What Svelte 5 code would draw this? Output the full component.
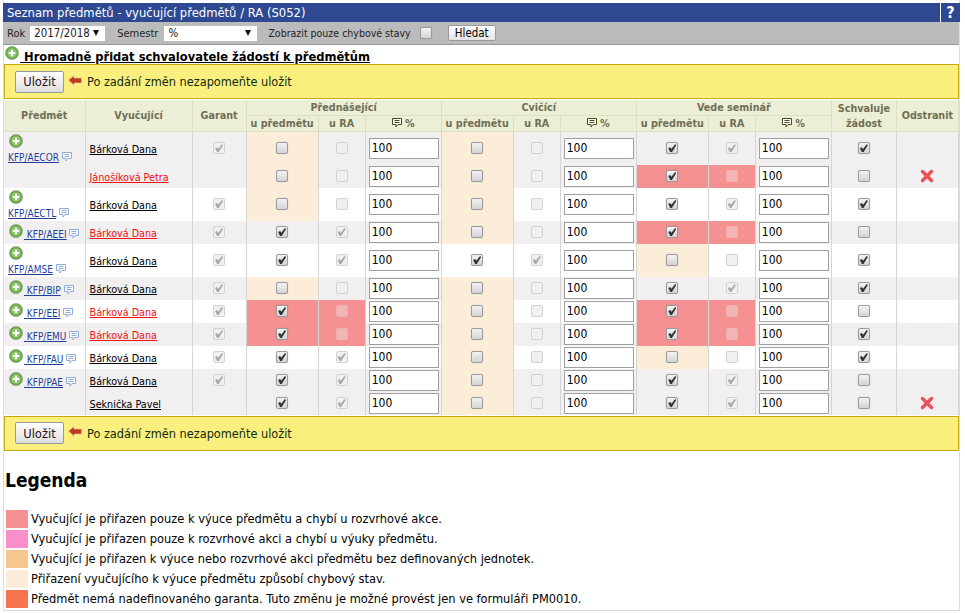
<script>
  const H = 'Bárková Dana';
  // state of one group: [cell colour, checked, checked RA]
  const w = (c = true) => ['', c, c];
  const cream = ['cream', false, false];
  const red = ['red', true, false];

  const subjects = [
    { code: 'KFP/AECOR', wrap: true, rows: [
      { name: H, garant: true, p: cream, c: cream, s: w(), ok: true, h: 33 },
      { name: 'Jánošíková Petra', bad: true, p: cream, c: cream, s: red, del: true, h: 23 }
    ] },
    { code: 'KFP/AECTL', wrap: true, rows: [{ name: H, garant: true, p: cream, c: cream, s: w(), ok: true, h: 33 }] },
    { code: 'KFP/AEEI', rows: [{ name: H, bad: true, garant: true, p: w(), c: cream, s: red, h: 23 }] },
    { code: 'KFP/AMSE', wrap: true, rows: [{ name: H, garant: true, p: w(), c: w(), s: cream, ok: true, h: 33 }] },
    { code: 'KFP/BIP', rows: [{ name: H, garant: true, p: cream, c: cream, s: w(), ok: true, h: 23 }] },
    { code: 'KFP/EEI', rows: [{ name: H, bad: true, garant: true, p: red, c: cream, s: red, h: 23 }] },
    { code: 'KFP/EMU', rows: [{ name: H, bad: true, garant: true, p: red, c: cream, s: red, ok: true, h: 23 }] },
    { code: 'KFP/FAU', rows: [{ name: H, garant: true, p: w(), c: cream, s: cream, ok: true, h: 23 }] },
    { code: 'KFP/PAE', rows: [
      { name: H, garant: true, p: w(), c: cream, s: w(), h: 23 },
      { name: 'Seknička Pavel', p: w(), c: cream, s: w(), del: true, h: 23 }
    ] }
  ];

  const legend = [
    ['#f59093', 'Vyučující je přiřazen pouze k výuce předmětu a chybí u rozvrhové akce.'],
    ['#f88fc8', 'Vyučující je přiřazen pouze k rozvrhové akci a chybí u výuky předmětu.'],
    ['#f6c78c', 'Vyučující je přiřazen k výuce nebo rozvrhové akci předmětu bez definovaných jednotek.'],
    ['#fcedd9', 'Přiřazení vyučujícího k výuce předmětu způsobí chybový stav.'],
    ['#f6744e', 'Předmět nemá nadefinovaného garanta. Tuto změnu je možné provést jen ve formuláři PM0010.']
  ];
</script>

{#snippet plus()}
  <svg class="plus" viewBox="0 0 14 14" width="14" height="14">
    <circle cx="7" cy="7" r="6.6" fill="#6fa94e" stroke="#8c9a80" stroke-width="0.6" />
    <circle cx="7" cy="7" r="4.6" fill="#8fc96b" />
    <path d="M7 3.8v6.4M3.8 7h6.4" stroke="#fff" stroke-width="2" />
  </svg>
{/snippet}

{#snippet note(color)}
  <svg class="note" viewBox="0 0 10 10" width="10" height="10">
    <path d="M.5.5h9v6H6L4 9V6.500H.5z" fill="#fff" stroke={color} />
    <path d="M2.500 2.500h5M2.500 4.500h5" stroke={color} />
  </svg>
{/snippet}

{#snippet save()}
  <div class="savebar">
    <button class="savebtn">Uložit</button>
    <svg class="arrow" viewBox="0 0 14 11" width="14" height="11">
      <path d="M0.5 5 6 0.700V3h7.500v5H6v2.300z" fill="#c0391b" stroke="#e2b9a4" stroke-width="0.7" />
    </svg>
    <span>Po zadání změn nezapomeňte uložit</span>
  </div>
{/snippet}

{#snippet group(g)}
  <td class={g[0]}><input type="checkbox" checked={g[1]} /></td>
  <td class={g[0] === 'red' ? 'red' : ''}><input type="checkbox" disabled checked={g[2]} /></td>
  <td class="pct"><input type="text" value="100" /></td>
{/snippet}

<div class="page">
  <div class="title">
    <span class="title-text">Seznam předmětů - vyučující předmětů / RA (S052)</span>
    <span class="help">?</span>
  </div>

  <div class="filter">
    <label for="rok">Rok</label>
    <div class="select rok" id="rok">2017/2018</div>
    <label for="sem" class="sem-label">Semestr</label>
    <div class="select sem" id="sem">%</div>
    <label for="chyby" class="err-label">Zobrazit pouze chybové stavy</label>
    <input id="chyby" type="checkbox" />
    <button class="search">Hledat</button>
  </div>

  <div class="bulk">
    {@render plus()}
    <a href="#bulk">&nbsp;Hromadně přidat schvalovatele žádostí k předmětům</a>
  </div>

  {@render save()}

  <table>
    <colgroup>
      <col style="width:81px" /><col style="width:107px" /><col style="width:54px" />
      <col style="width:72px" /><col style="width:47px" /><col style="width:76px" />
      <col style="width:72px" /><col style="width:47px" /><col style="width:76px" />
      <col style="width:72px" /><col style="width:47px" /><col style="width:76px" />
      <col style="width:65px" /><col style="width:62px" />
    </colgroup>
    <thead>
      <tr>
        <th rowspan="2">Předmět</th>
        <th rowspan="2">Vyučující</th>
        <th rowspan="2">Garant</th>
        <th colspan="3">Přednášející</th>
        <th colspan="3">Cvičící</th>
        <th colspan="3">Vede seminář</th>
        <th rowspan="2">Schvaluje<br />žádost</th>
        <th rowspan="2">Odstranit</th>
      </tr>
      <tr>
        {#each [1, 2, 3] as _}
          <th>u předmětu</th>
          <th>u RA</th>
          <th>{@render note('#4a4a1e')} %</th>
        {/each}
      </tr>
    </thead>
    <tbody>
      {#each subjects as subj, i}
        {#each subj.rows as row, j}
          <tr class:alt={i % 2 === 0} style="height:{row.h}px">
            {#if j === 0}
              <td class="subj" class:wrap={subj.wrap} rowspan={subj.rows.length}>
                {@render plus()}{#if subj.wrap}<br /><a href="#s">{subj.code}</a>{:else}<a class="inline" href="#s">&nbsp;{subj.code}</a>{/if}
                {@render note('#8fabd8')}
              </td>
            {/if}
            <td class="name"><a href="#n" class:bad={row.bad}>{row.name}</a></td>
            <td>{#if row.garant}<input type="checkbox" disabled checked />{/if}</td>
            {@render group(row.p)}
            {@render group(row.c)}
            {@render group(row.s)}
            <td><input type="checkbox" checked={row.ok} /></td>
            <td>
              {#if row.del}
                <svg viewBox="0 0 14 14" width="14" height="14">
                  <path d="M2.500 2.500 11.500 11.500M11.500 2.500 2.500 11.500" stroke="#e8515a" stroke-width="3.400" stroke-linecap="round" />
                </svg>
              {/if}
            </td>
          </tr>
        {/each}
      {/each}
    </tbody>
  </table>

  {@render save()}

  <h2>Legenda</h2>
  <div class="legend">
    {#each legend as [color, text]}
      <div class="legend-row">
        <span class="swatch" style="background:{color}"></span>
        <span>{text}</span>
      </div>
    {/each}
  </div>
</div>

<style>
  :global(body) {
    background: #fff;
    font-family: "DejaVu Sans Condensed", "DejaVu Sans", sans-serif;
    font-size: 12px;
    color: #000;
  }

  .page {
    width: 955px;
    height: 607px;
    margin-left: 3px;
    padding-top: 3px;
    border-right: 1px solid #ddd;
    border-left: 1px solid #ddd;
    border-bottom: 1px solid #ddd;
  }

  .title {
    display: flex;
    height: 19px;
    margin: 0 -1px;
    align-items: center;
    justify-content: space-between;
    background: #2e4891;
    color: #fff;
    font-size: 12.900px;
  }

  .title-text {
    padding-left: 4px;
  }

  .help {
    width: 19px;
    height: 19px;
    border-left: 1px solid #fff;
    font-size: 16px;
    font-weight: bold;
    line-height: 19px;
    text-align: center;
  }

  .filter {
    display: flex;
    height: 23px;
    box-sizing: border-box;
    margin-left: -1px;
    align-items: center;
    padding-left: 4px;
    background: #bbb;
    border-bottom: 1px solid #999;
    font-size: 11px;
    color: #222;
  }

  .select {
    position: relative;
    height: 15px;
    box-sizing: border-box;
    padding-left: 4px;
    background: #fff;
    font-size: 11.400px;
    line-height: 15px;
  }

  .select::after {
    content: "";
    position: absolute;
    top: 4px;
    right: 6px;
    border-top: 6px solid #111;
    border-left: 3px solid transparent;
    border-right: 3px solid transparent;
  }

  .rok {
    width: 75px;
    margin-left: 5px;
  }

  .sem {
    width: 93px;
    margin-left: 6px;
  }

  .sem-label {
    margin-left: 12px;
  }

  .err-label {
    margin-left: 11px;
    margin-right: 9px;
    font-size: 10.500px;
  }

  .search {
    width: 48px;
    height: 16px;
    margin-left: 16px;
    padding: 0;
    border: 1px solid #999;
    border-radius: 2px;
    background: linear-gradient(#fff, #e4e4e4);
    font: 11.400px "DejaVu Sans Condensed", "DejaVu Sans", sans-serif;
  }

  .bulk {
    display: flex;
    height: 19px;
    align-items: flex-start;
    padding-left: 1px;
    font-size: 12.800px;
    font-weight: bold;
  }

  .bulk .plus {
    margin-top: 1px;
  }

  .bulk a {
    margin-top: 4px;
    margin-left: 1px;
    color: #000;
    line-height: 15px;
  }

  .savebar {
    display: flex;
    height: 35px;
    box-sizing: border-box;
    align-items: center;
    padding-left: 10px;
    background: #fbf07e;
    border: 1px solid #c9a80f;
    font-size: 12.600px;
    color: #102a10;
  }

  .arrow {
    margin: -3px 5px 0 4px;
  }

  .savebtn {
    width: 49px;
    height: 22px;
    padding: 0;
    border: 1px solid #999;
    border-radius: 2px;
    background: linear-gradient(#fff, #dedede);
    color: #301010;
    font: 12.900px "DejaVu Sans Condensed", "DejaVu Sans", sans-serif;
  }

  table {
    width: 955px;
    margin-top: 1px;
    margin-bottom: 1px;
    table-layout: fixed;
    border-collapse: collapse;
  }

  th {
    height: 15px;
    padding: 0;
    background: #eceed5;
    border: 1px solid #dde0c0;
    border-width: 0 1px 1px 0;
    color: #6f6f57;
    font-size: 10.700px;
    font-weight: bold;
    line-height: 15px;
    text-align: center;
  }

  td {
    padding: 0;
    background: #fff;
    border-right: 1px solid #d5d5d5;
    text-align: center;
    vertical-align: middle;
    line-height: 0;
  }

  tr.alt td {
    background: #f1eff0;
  }

  tr td.cream,
  tr.alt td.cream {
    background: #fcedd9;
  }

  tr td.red,
  tr.alt td.red {
    background: #f59093;
  }

  td.subj {
    padding: 3px 0 0 4px;
    font-size: 10px;
    line-height: 13px;
    text-align: left;
    vertical-align: top;
    white-space: nowrap;
  }

  td.subj.wrap {
    padding-top: 2px;
  }

  .subj .plus {
    margin-left: 1px;
  }

  .subj a {
    color: #1f3f9a;
  }

  .subj a.inline {
    margin-left: 1px;
  }

  .note {
    vertical-align: -1px;
  }

  td.name {
    padding: 3px 0 0 4px;
    font-size: 10.700px;
    line-height: 14px;
    text-align: left;
  }

  .name a {
    color: #000;
  }

  .name a.bad {
    color: #f01010;
  }

  td.pct {
    padding-left: 3px;
    text-align: left;
  }

  input[type="text"] {
    width: 70px;
    height: 21px;
    box-sizing: border-box;
    padding: 0 2px;
    border: 1px solid #a0a0a0;
    background: #fff;
    color: #000;
    font: 12px "DejaVu Sans Condensed", "DejaVu Sans", sans-serif;
    vertical-align: middle;
  }

  input[type="checkbox"] {
    position: relative;
    width: 12px;
    height: 12px;
    margin: 0;
    appearance: none;
    border: 1px solid #9a9a9a;
    border-radius: 2px;
    background: linear-gradient(#f2f2f2, #d4d4d4);
    box-shadow: 0 0 1px rgba(0, 0, 0, 0.25);
    vertical-align: middle;
  }

  input[type="checkbox"]:disabled {
    border-color: #d2d2d2;
    background: #f0f0f0;
    box-shadow: none;
  }

  tr td.red input:disabled {
    border-color: #eeb0b0;
    background: #f2b5b5;
  }

  input[type="checkbox"]:checked::after {
    content: "";
    position: absolute;
    inset: 1px;
    background: #333;
    clip-path: polygon(0 50%, 25% 38%, 40% 60%, 85% 0, 100% 12%, 45% 100%, 25% 100%);
  }

  input[type="checkbox"]:disabled:checked::after {
    background: #a8a8a8;
  }

  h2 {
    margin: 17px 0 0 1px;
    font-size: 19px;
    font-weight: bold;
    line-height: 24px;
  }

  .legend {
    display: flex;
    flex-direction: column;
    gap: 2px;
    margin-top: 18px;
    padding-left: 2px;
  }

  .legend-row {
    display: flex;
    height: 18px;
    align-items: center;
    gap: 3px;
    font-size: 12.700px;
  }

  .swatch {
    width: 22px;
    height: 18px;
  }
</style>
